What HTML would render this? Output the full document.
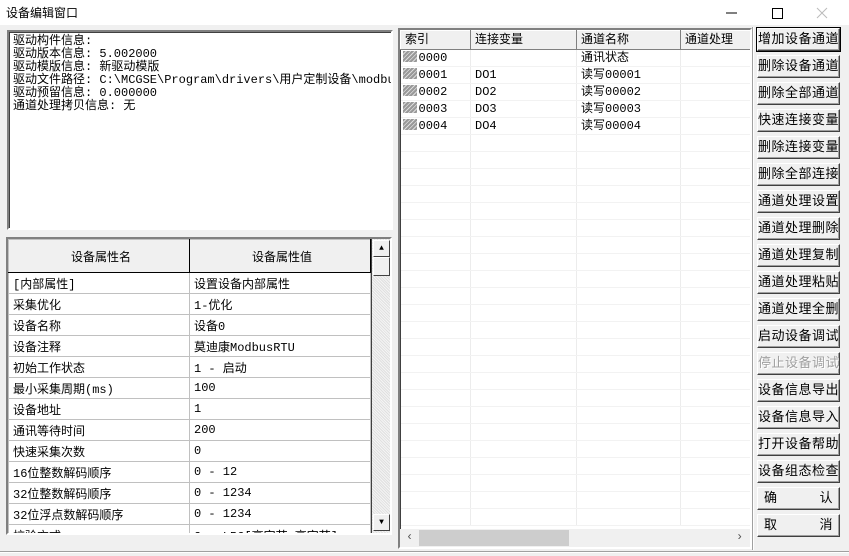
<!DOCTYPE html>
<html><head><meta charset="utf-8"><style>
*{box-sizing:border-box;margin:0;padding:0}
body{width:849px;height:556px;background:#f0f0f0;font:12px "Liberation Mono","Noto Sans CJK SC","WenQuanYi Zen Hei",monospace;color:#000;position:relative;overflow:hidden}
.abs{position:absolute}
#title{left:0;top:0;width:849px;height:25px;background:#fff;}
#title span{position:absolute;left:6px;top:4px;font-family:"Liberation Sans","Noto Sans CJK SC",sans-serif;font-size:12px}
.sunk{border:2px solid;border-color:#808080 #fff #fff #808080;box-shadow:inset 1px 1px 0 #404040}
#info{left:7px;top:30px;width:386px;height:200px;background:#fff;padding:3px 0 0 4px;line-height:13px;white-space:pre;overflow:hidden;font-size:12px}
#prop{left:6px;top:237px;width:386px;height:298px;background:#fff;overflow:hidden}
table{border-collapse:collapse;table-layout:fixed}
#pt td{border:1px solid #c0c0c0;height:21px;padding:0 0 0 4px;white-space:nowrap;overflow:hidden;font-size:12px}
#pt tr.h td{height:33px;text-align:center;background:#f0f0f0;border-right:1px solid #000;border-bottom:1px solid #000}
#vs{left:363px;top:0px;width:19px;height:294px;background:#e8e8e8;background-image:repeating-linear-gradient(45deg,#f4f4f4 0 1px,#e0e0e0 1px 2px);border-left:1px solid #404040}
.sb{position:absolute;left:1px;width:17px;height:17px;background:#f0f0f0;border:1px solid;border-color:#fff #404040 #404040 #fff;font-size:8px;text-align:center;line-height:15px}
#list{left:398px;top:28px;width:354px;height:521px;background:#fff;overflow:hidden}
#lt td{border-right:1px solid #ececec;border-bottom:1px solid #f2f2f2;height:17px;padding:0 0 0 4px;white-space:nowrap;font-size:12px;line-height:16px}
#lt tr.h td{background:#f0f0f0;border:1px solid;border-color:#fff #808080 #808080 #fff;height:19px}
.ic{display:inline-block;width:14px;height:11px;background:repeating-linear-gradient(135deg,#999 0 2px,#ddd 2px 3px);vertical-align:-1px;margin-left:-2px;margin-right:2px}
#hs{left:0;top:499px;width:350px;height:18px;background:#f0f0f0}
#sep{left:752px;top:27px;width:2px;height:523px;border-left:1px solid #a0a0a0;border-right:1px solid #fff}
.btn{position:absolute;left:757px;width:83px;height:23px;background:#f0f0f0;border:1px solid;border-color:#fff #404040 #404040 #fff;box-shadow:inset -1px -1px 0 #a0a0a0;text-align:center;line-height:21px;font-size:13px;letter-spacing:0.5px;white-space:nowrap}
.btn.f{outline:1px solid #000}
.btn.d{color:#a0a0a0;text-shadow:1px 1px 0 #fff}
.btn.s{text-align:left;padding:0 6px}
.btn.s b{float:right;font-weight:normal}
</style></head><body>
<div id="title" class="abs"><span>设备编辑窗口</span>
<svg class="abs" style="left:720px;top:6px" width="120" height="14"><line x1="6" y1="7" x2="17" y2="7" stroke="#000"/><rect x="52.5" y="2.5" width="10" height="10" fill="none" stroke="#000"/><path d="M97 2L107 12M107 2L97 12" stroke="#bbb"/></svg></div>
<div id="info" class="abs sunk">驱动构件信息:
驱动版本信息: 5.002000
驱动模版信息: 新驱动模版
驱动文件路径: C:\MCGSE\Program\drivers\用户定制设备\modbus
驱动预留信息: 0.000000
通道处理拷贝信息: 无</div>
<div id="prop" class="abs sunk">
<table id="pt" style="width:362px"><colgroup><col style="width:181px"><col style="width:181px"></colgroup>
<tr class="h"><td>设备属性名</td><td>设备属性值</td></tr>
<tr><td>[内部属性]</td><td>设置设备内部属性</td></tr>
<tr><td>采集优化</td><td>1-优化</td></tr>
<tr><td>设备名称</td><td>设备0</td></tr>
<tr><td>设备注释</td><td>莫迪康ModbusRTU</td></tr>
<tr><td>初始工作状态</td><td>1 - 启动</td></tr>
<tr><td>最小采集周期(ms)</td><td>100</td></tr>
<tr><td>设备地址</td><td>1</td></tr>
<tr><td>通讯等待时间</td><td>200</td></tr>
<tr><td>快速采集次数</td><td>0</td></tr>
<tr><td>16位整数解码顺序</td><td>0 - 12</td></tr>
<tr><td>32位整数解码顺序</td><td>0 - 1234</td></tr>
<tr><td>32位浮点数解码顺序</td><td>0 - 1234</td></tr>
<tr><td>校验方式</td><td>2 - LRC[高字节_高字节]</td></tr>
</table>
<div id="vs" class="abs"><div class="sb" style="top:1px">▲</div><div class="sb" style="top:18px;height:19px"></div><div class="sb" style="top:275px">▼</div></div>
</div>
<div id="list" class="abs sunk">
<table id="lt" style="width:350px"><colgroup><col style="width:70px"><col style="width:106px"><col style="width:104px"><col style="width:70px"></colgroup>
<tr class="h"><td>索引</td><td>连接变量</td><td>通道名称</td><td>通道处理</td></tr>
<tr><td><span class="ic"></span>0000</td><td></td><td>通讯状态</td><td></td></tr>
<tr><td><span class="ic"></span>0001</td><td>DO1</td><td>读写00001</td><td></td></tr>
<tr><td><span class="ic"></span>0002</td><td>DO2</td><td>读写00002</td><td></td></tr>
<tr><td><span class="ic"></span>0003</td><td>DO3</td><td>读写00003</td><td></td></tr>
<tr><td><span class="ic"></span>0004</td><td>DO4</td><td>读写00004</td><td></td></tr>
<tr><td></td><td></td><td></td><td></td></tr><tr><td></td><td></td><td></td><td></td></tr><tr><td></td><td></td><td></td><td></td></tr><tr><td></td><td></td><td></td><td></td></tr><tr><td></td><td></td><td></td><td></td></tr><tr><td></td><td></td><td></td><td></td></tr><tr><td></td><td></td><td></td><td></td></tr><tr><td></td><td></td><td></td><td></td></tr><tr><td></td><td></td><td></td><td></td></tr><tr><td></td><td></td><td></td><td></td></tr><tr><td></td><td></td><td></td><td></td></tr><tr><td></td><td></td><td></td><td></td></tr><tr><td></td><td></td><td></td><td></td></tr><tr><td></td><td></td><td></td><td></td></tr><tr><td></td><td></td><td></td><td></td></tr><tr><td></td><td></td><td></td><td></td></tr><tr><td></td><td></td><td></td><td></td></tr><tr><td></td><td></td><td></td><td></td></tr><tr><td></td><td></td><td></td><td></td></tr><tr><td></td><td></td><td></td><td></td></tr><tr><td></td><td></td><td></td><td></td></tr><tr><td></td><td></td><td></td><td></td></tr><tr><td></td><td></td><td></td><td></td></tr>
</table>
<div id="hs" class="abs"><span class="abs" style="left:6px;top:1px;color:#555">‹</span><div class="abs" style="left:19px;top:1px;width:150px;height:16px;background:#cdcdcd"></div><span class="abs" style="left:336px;top:1px;color:#555">›</span></div>
</div>
<div id="sep" class="abs"></div>
<div class="btn f" style="top:28px">增加设备通道</div>
<div class="btn" style="top:55px">删除设备通道</div>
<div class="btn" style="top:82px">删除全部通道</div>
<div class="btn" style="top:109px">快速连接变量</div>
<div class="btn" style="top:136px">删除连接变量</div>
<div class="btn" style="top:163px">删除全部连接</div>
<div class="btn" style="top:190px">通道处理设置</div>
<div class="btn" style="top:217px">通道处理删除</div>
<div class="btn" style="top:244px">通道处理复制</div>
<div class="btn" style="top:271px">通道处理粘贴</div>
<div class="btn" style="top:298px">通道处理全删</div>
<div class="btn" style="top:325px">启动设备调试</div>
<div class="btn d" style="top:352px">停止设备调试</div>
<div class="btn" style="top:379px">设备信息导出</div>
<div class="btn" style="top:406px">设备信息导入</div>
<div class="btn" style="top:433px">打开设备帮助</div>
<div class="btn" style="top:460px">设备组态检查</div>
<div class="btn s" style="top:487px">确<b>认</b></div>
<div class="btn s" style="top:514px">取<b>消</b></div>
<div class="abs" style="left:0;top:551px;width:849px;height:2px;border-top:1px solid #a0a0a0;border-bottom:1px solid #fff"></div>
</body></html>
